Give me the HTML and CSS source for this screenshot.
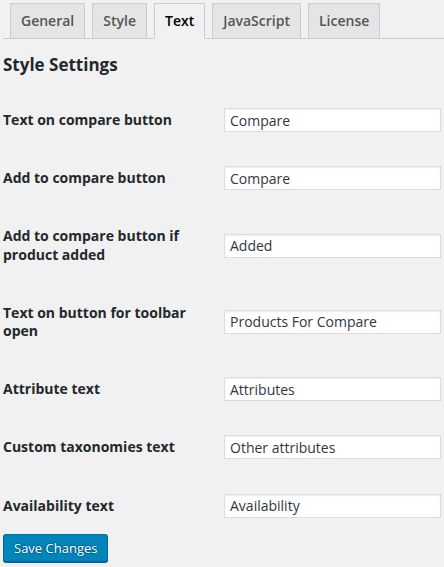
FILE: index.html
```html
<!DOCTYPE html>
<html>
<head>
<meta charset="utf-8">
<link rel="stylesheet" href="styles.css">
</head>
<body>
<div class="wrap">
  <nav class="tabs">
    <a class="tab">General</a>
    <a class="tab">Style</a>
    <a class="tab active">Text</a>
    <a class="tab">JavaScript</a>
    <a class="tab">License</a>
  </nav>
  <h2 class="title">Style Settings</h2>
  <div class="form">
    <div class="row">
      <div class="label">Text on compare button</div>
      <div class="field"><input class="input" type="text" value="Compare"></div>
    </div>
    <div class="row">
      <div class="label">Add to compare button</div>
      <div class="field"><input class="input" type="text" value="Compare"></div>
    </div>
    <div class="row">
      <div class="label">Add to compare button if product added</div>
      <div class="field"><input class="input" type="text" value="Added"></div>
    </div>
    <div class="row">
      <div class="label">Text on button for toolbar open</div>
      <div class="field"><input class="input" type="text" value="Products For Compare"></div>
    </div>
    <div class="row">
      <div class="label">Attribute text</div>
      <div class="field"><input class="input" type="text" value="Attributes"></div>
    </div>
    <div class="row">
      <div class="label">Custom taxonomies text</div>
      <div class="field"><input class="input" type="text" value="Other attributes"></div>
    </div>
    <div class="row">
      <div class="label">Availability text</div>
      <div class="field"><input class="input" type="text" value="Availability"></div>
    </div>
  </div>
  <button class="button" type="button">Save Changes</button>
</div>
</body>
</html>
```
FILE: styles.css
```css
html, body {
  margin: 0;
  padding: 0;
  background: #f1f1f1;
}
body {
  font-family: "Open Sans", "Noto Sans", sans-serif;
  color: #23282d;
  font-size: 14px;
}
.wrap {
  padding: 0 0 0 3px;
  overflow: hidden;
  height: 567px;
  box-sizing: border-box;
}
.tabs {
  display: flex;
  padding-top: 3px;
  border-bottom: 1px solid #ccc;
}
.tab {
  display: block;
  margin: 0 0 -1px 7px;
  padding: 5px 10px;
  line-height: 24px;
  font-size: 14px;
  font-weight: 600;
  color: #555;
  background: #e5e5e5;
  border: 1px solid #ccc;
  white-space: nowrap;
}
.tab.active {
  background: #f1f1f1;
  color: #000;
  border-bottom-color: #f1f1f1;
}
.title {
  margin: 15px 0 0;
  font-size: 17px;
  line-height: 22px;
  font-weight: 700;
  color: #23282d;
}
.form {
  margin-top: 15px;
  display: flex;
  flex-direction: column;
}
.row {
  display: flex;
}
.label {
  width: 200px;
  flex: none;
  padding: 20px 10px 20px 0;
  line-height: 1.3;
  font-weight: 700;
  font-size: 14px;
  color: #23282d;
}
.field {
  align-self: center;
  padding: 15px 0 15px 11px;
}
.input {
  display: block;
  box-sizing: border-box;
  width: 217px;
  height: 24px;
  margin: 0;
  padding: 0 5px;
  border: 1px solid #ddd;
  background: #fff;
  box-shadow: inset 0 1px 2px rgba(0,0,0,.07);
  font-family: "Open Sans", "Noto Sans", sans-serif;
  font-size: 14px;
  color: #32373c;
  outline: none;
}
.button {
  display: block;
  margin-top: -1px;
  height: 28px;
  padding: 0 10px;
  font-family: "Open Sans", "Noto Sans", sans-serif;
  font-size: 13px;
  line-height: 26px;
  color: #fff;
  background: #0085ba;
  border: 1px solid #0073aa;
  border-color: #0073aa #006799 #006799;
  border-radius: 3px;
  box-shadow: 0 1px 0 #006799;
  text-shadow: 0 -1px 1px #006799, 1px 0 1px #006799, 0 1px 1px #006799, -1px 0 1px #006799;
}
```
